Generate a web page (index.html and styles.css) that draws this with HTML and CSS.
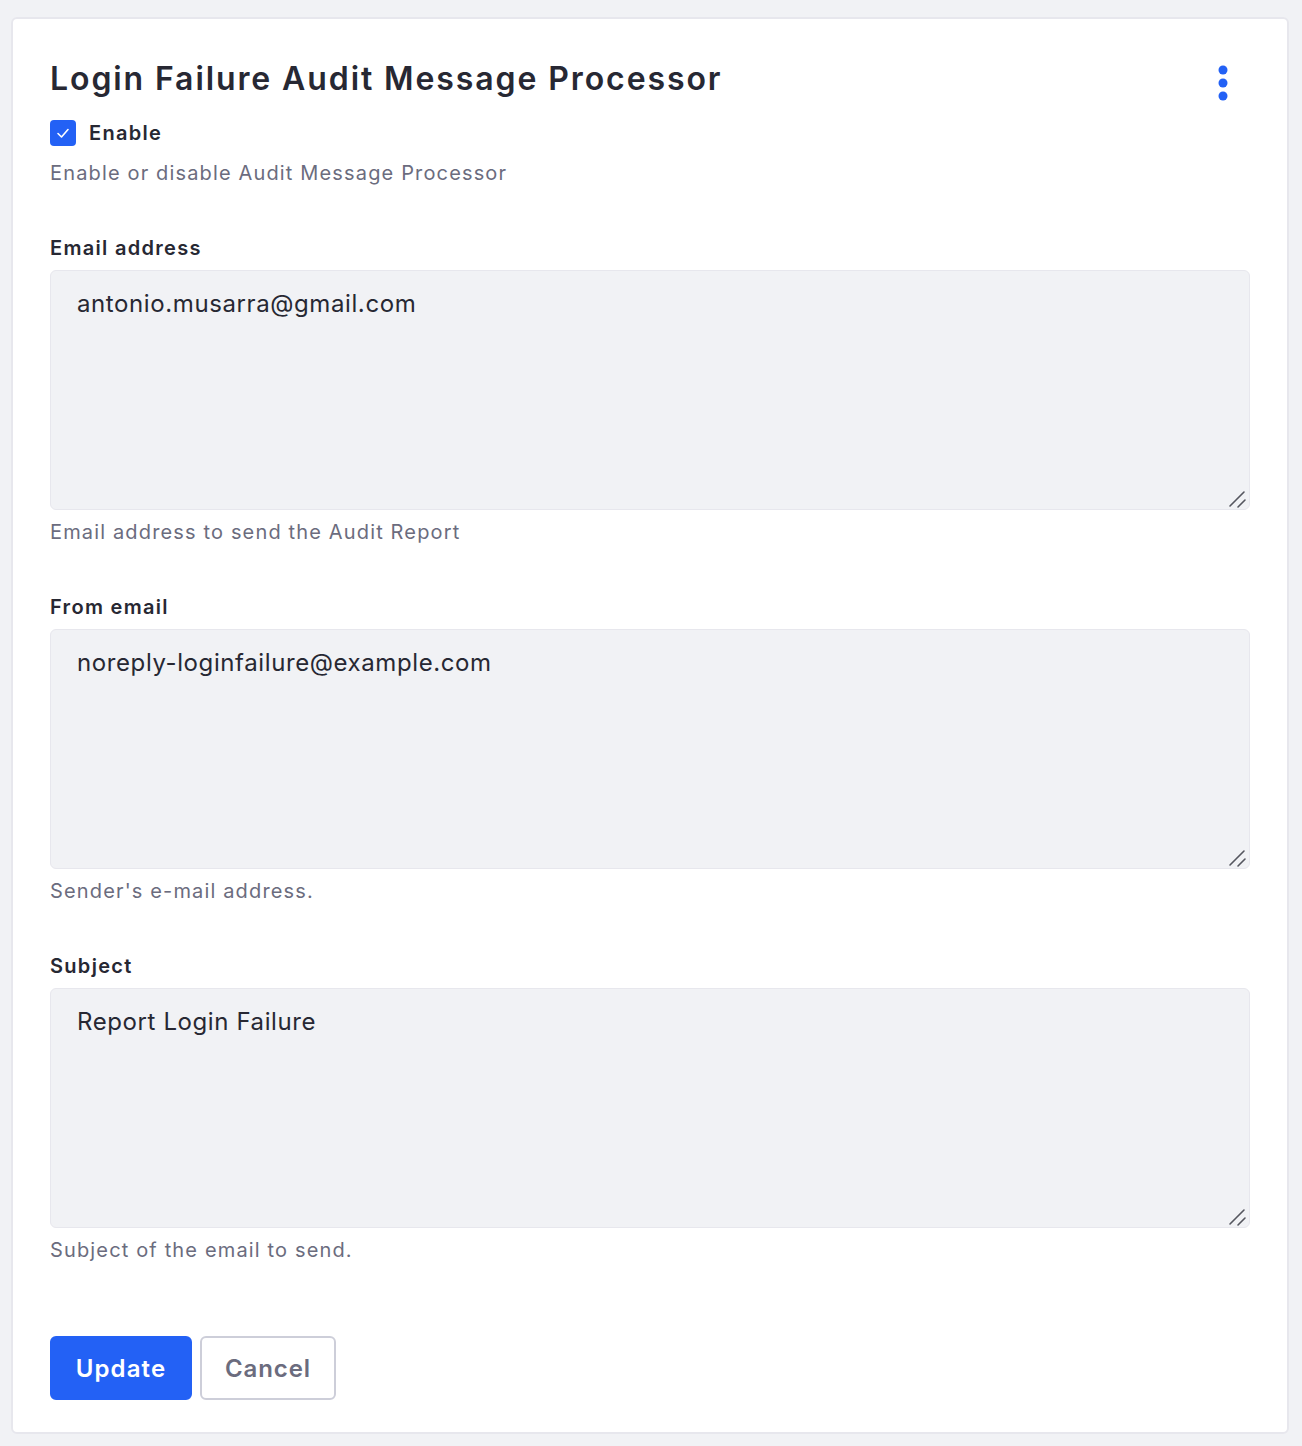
FILE: index.html
```html
<!DOCTYPE html>
<html lang="en">
<head>
<meta charset="utf-8">
<title>Login Failure Audit Message Processor</title>
<link rel="stylesheet" href="styles.css">
</head>
<body>
<div class="card">
  <div class="card-header">
    <h1 class="title">Login Failure Audit Message Processor</h1>
    <button class="kebab" aria-label="Options">
      <svg width="12" height="40" viewBox="0 0 12 40"><circle cx="6" cy="7" r="4.5" fill="#2361f5"/><circle cx="6" cy="20" r="4.5" fill="#2361f5"/><circle cx="6" cy="33" r="4.5" fill="#2361f5"/></svg>
    </button>
  </div>
  <label class="check">
    <span class="box"><svg width="16" height="16" viewBox="0 0 16 16"><path d="M3 8.5 L6.5 12 L13 4.5" fill="none" stroke="#fff" stroke-width="1.6" stroke-linecap="round" stroke-linejoin="round"/></svg></span>
    <span class="check-label">Enable</span>
  </label>
  <p class="help first">Enable or disable Audit Message Processor</p>

  <div class="field">
    <label class="label">Email address</label>
    <div class="input-wrap">
      <textarea class="input" readonly>antonio.musarra@gmail.com</textarea>
      <svg class="grip" width="24" height="24" viewBox="0 0 24 24"><path d="M5 20 L19 6 M13 21 L20 14" stroke="#55565f" stroke-width="1.6" stroke-linecap="round"/></svg>
    </div>
    <p class="help">Email address to send the Audit Report</p>
  </div>
  <div class="field">
    <label class="label">From email</label>
    <div class="input-wrap">
      <textarea class="input" readonly>noreply-loginfailure@example.com</textarea>
      <svg class="grip" width="24" height="24" viewBox="0 0 24 24"><path d="M5 20 L19 6 M13 21 L20 14" stroke="#55565f" stroke-width="1.6" stroke-linecap="round"/></svg>
    </div>
    <p class="help">Sender's e-mail address.</p>
  </div>
  <div class="field">
    <label class="label">Subject</label>
    <div class="input-wrap">
      <textarea class="input" readonly>Report Login Failure</textarea>
      <svg class="grip" width="24" height="24" viewBox="0 0 24 24"><path d="M5 20 L19 6 M13 21 L20 14" stroke="#55565f" stroke-width="1.6" stroke-linecap="round"/></svg>
    </div>
    <p class="help">Subject of the email to send.</p>
  </div>

  <div class="actions">
    <button class="btn btn-primary">Update</button>
    <button class="btn btn-secondary">Cancel</button>
  </div>
</div>
</body>
</html>
```
FILE: styles.css
```css
* { box-sizing: border-box; }
html, body { margin: 0; padding: 0; }
body {
  background: #f1f2f5;
  font-family: Inter, "Noto Sans", "Liberation Sans", sans-serif;
  color: #272833;
  padding: 17px 13px 0 11px;
}
.card {
  background: #fff;
  border: 2px solid #e7e7ed;
  border-radius: 6px;
  padding: 36px 38px 32px 37px;
  width: 1278px;
}
.card-header {
  display: flex;
  justify-content: space-between;
  align-items: flex-start;
}
.title {
  margin: 0;
  font-size: 32px;
  font-weight: 600;
  line-height: 48px;
  color: #272833;
  letter-spacing: 1.9px;
}
.kebab {
  background: none;
  border: 0;
  padding: 0;
  margin: 8px 20px 0 0;
  width: 12px;
  height: 40px;
}
.kebab svg { display: block; }
.check {
  display: flex;
  align-items: center;
  gap: 13px;
  margin-top: 15px;
  height: 30px;
}
.box {
  width: 26px;
  height: 26px;
  border-radius: 4px;
  background: #2361f5;
  display: flex;
  align-items: center;
  justify-content: center;
}
.check-label {
  font-size: 20px;
  font-weight: 600;
  letter-spacing: 1.3px;
}
.help {
  margin: 0;
  font-size: 20px;
  line-height: 30px;
  color: #6b6c7e;
  letter-spacing: 1.15px;
}
.help.first { margin-top: 10px; margin-bottom: 45px; }
.field { margin-bottom: 45px; }
.label {
  display: block;
  font-size: 20px;
  font-weight: 600;
  line-height: 30px;
  margin-bottom: 7px;
  letter-spacing: 1.3px;
}
.input-wrap {
  position: relative;
  margin-bottom: 7px;
}
.input {
  display: block;
  width: 1200px;
  height: 240px;
  background: #f1f2f5;
  border: 1px solid #e7e7ed;
  border-radius: 6px;
  padding: 15px 26px;
  font-family: Inter, "Noto Sans", "Liberation Sans", sans-serif;
  font-size: 24px;
  line-height: 36px;
  color: #272833;
  letter-spacing: 0.6px;
  resize: none;
  outline: none;
}
.grip {
  position: absolute;
  right: 0;
  bottom: 0;
  pointer-events: none;
}
.actions {
  display: flex;
  gap: 8px;
  margin-top: 71px;
}
.btn {
  height: 64px;
  border-radius: 6px;
  font-family: Inter, "Noto Sans", "Liberation Sans", sans-serif;
  font-size: 24px;
  font-weight: 600;
  padding: 0;
  cursor: pointer;
}
.btn-primary {
  background: #2361f5;
  border: 2px solid #2361f5;
  color: #fff;
  width: 142px;
  letter-spacing: 1.1px;
}
.btn-secondary {
  background: #fff;
  border: 2px solid #cdced9;
  color: #6b6c7e;
  width: 136px;
  letter-spacing: 0.9px;
}
```
